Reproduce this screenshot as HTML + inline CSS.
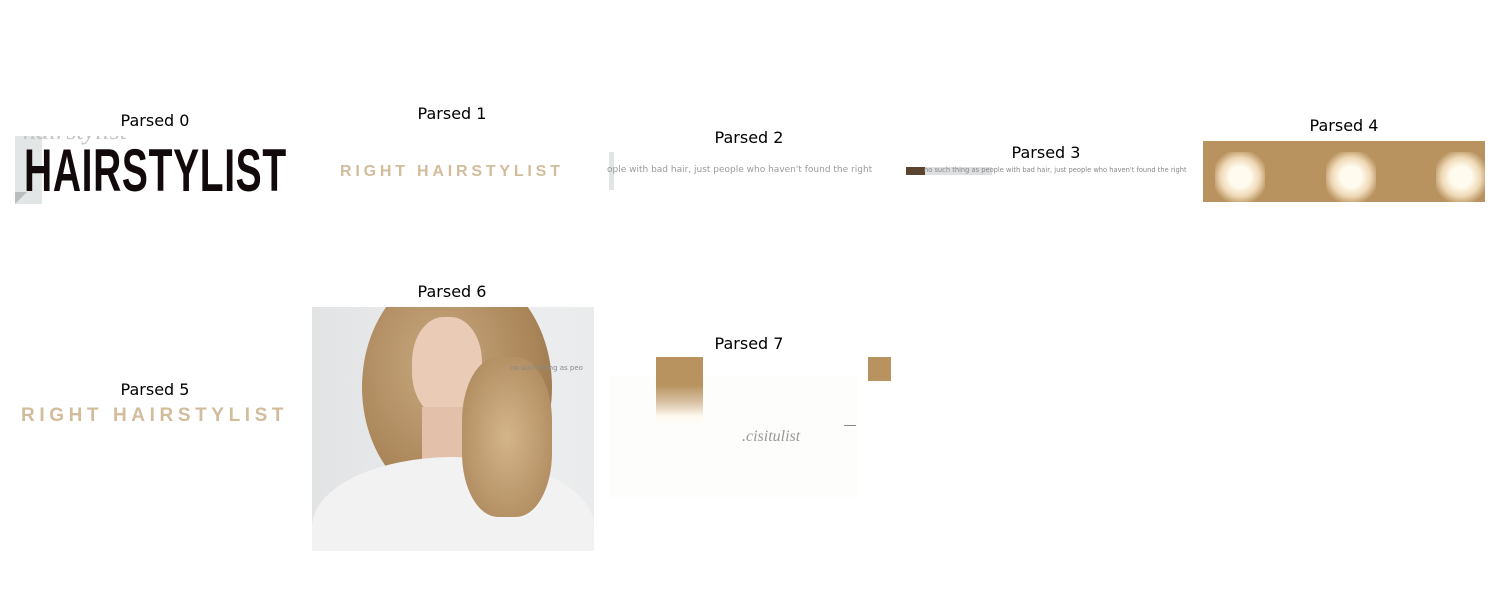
<!DOCTYPE html>
<html><head><style>
body{margin:0;width:1500px;height:600px;background:#fff;position:relative;overflow:hidden;font-family:"DejaVu Sans",sans-serif}
.t{position:absolute;font-size:16px;color:#000;transform:translateX(-50%);white-space:nowrap;line-height:1}
.a{position:absolute}
.pix{font-family:"Liberation Sans",sans-serif;font-weight:bold;color:#d2bc9c;white-space:nowrap}
</style></head><body>
<div class="t" style="left:155px;top:113px">Parsed 0</div>
<div class="t" style="left:452px;top:106px">Parsed 1</div>
<div class="t" style="left:749px;top:130px">Parsed 2</div>
<div class="t" style="left:1046px;top:145px">Parsed 3</div>
<div class="t" style="left:1344px;top:118px">Parsed 4</div>
<div class="t" style="left:155px;top:382px">Parsed 5</div>
<div class="t" style="left:452px;top:284px">Parsed 6</div>
<div class="t" style="left:749px;top:336px">Parsed 7</div>

<!-- 0 -->
<div class="a" style="left:15px;top:136px;width:272px;height:68px;overflow:hidden">
 <div class="a" style="left:0;top:0;width:27px;height:68px;background:#e3e6e6"></div>
 <div class="a" style="left:0;top:56px;width:0;height:0;border-left:12px solid #b9bdbd;border-bottom:12px solid transparent"></div>
 <div class="a" style="left:8px;top:-20px;font-family:'Liberation Serif',serif;font-style:italic;font-size:26px;color:#c4c4c4">hairstylist</div>
 <div class="a" style="left:9px;top:7px;font-family:'Liberation Sans Narrow','Liberation Sans',sans-serif;font-weight:bold;font-size:60px;line-height:56px;color:#120a0a;transform:scaleX(0.65);transform-origin:left;letter-spacing:1px;white-space:nowrap">HAIRSTYLIST</div>
</div>

<!-- 1 -->
<div class="a pix" style="left:340px;top:163px;font-size:16px;line-height:18px;letter-spacing:3.8px">RIGHT HAIRSTYLIST</div>

<!-- 2 -->
<div class="a" style="left:609px;top:152px;width:5px;height:38px;background:#e2e5e5"></div>
<div class="a" style="left:607px;top:165px;font-size:9px;color:#9a9a9a;white-space:nowrap;overflow:hidden;width:272px">ople with bad hair, just people who haven't found the right</div>

<!-- 3 -->
<div class="a" style="left:906px;top:167px;width:19px;height:8px;background:#5a4430"></div>
<div class="a" style="left:925px;top:167px;width:67px;height:8px;background:#dde0e0"></div>
<div class="a" style="left:924px;top:166px;font-size:7px;color:#888;white-space:nowrap;transform:scaleX(0.955);transform-origin:left">no such thing as people with bad hair, just people who haven't found the right</div>

<!-- 4 -->
<div class="a" style="left:1203px;top:141px;width:282px;height:61px;background:#b8925f;overflow:hidden">
<div class="a" style="left:12px;top:11px;width:50px;height:50px;background:radial-gradient(ellipse at center,#fffbee 30%,#efd9b6 55%,#b8925f 80%)"></div>
<div class="a" style="left:123px;top:11px;width:50px;height:50px;background:radial-gradient(ellipse at center,#fffbee 30%,#efd9b6 55%,#b8925f 80%)"></div>
<div class="a" style="left:233px;top:11px;width:50px;height:50px;background:radial-gradient(ellipse at center,#fffbee 30%,#efd9b6 55%,#b8925f 80%)"></div>
</div>

<!-- 5 -->
<div class="a pix" style="left:21px;top:405px;font-size:19px;line-height:21px;letter-spacing:4.6px">RIGHT HAIRSTYLIST</div>

<!-- 6 photo -->
<div class="a" style="left:312px;top:307px;width:282px;height:244px;overflow:hidden;background:linear-gradient(90deg,#e1e3e4,#eceeef 60%,#e9ebec)">
 <div class="a" style="left:50px;top:-40px;width:190px;height:240px;border-radius:50%;background:radial-gradient(ellipse at 40% 40%,#c9a880,#a98558 60%,#8a6a45)"></div>
 <div class="a" style="left:100px;top:10px;width:70px;height:100px;border-radius:45%;background:#e9cbb6"></div>
 <div class="a" style="left:110px;top:100px;width:45px;height:60px;background:#e2c0aa"></div>
 <div class="a" style="left:0px;top:150px;width:282px;height:140px;border-radius:50% 50% 0 0;background:#f2f2f2"></div>
 <div class="a" style="left:150px;top:50px;width:90px;height:160px;border-radius:40%;background:radial-gradient(ellipse,#d4b48a,#a88457)"></div>
 <div class="a" style="left:198px;top:57px;font-size:7px;color:#888;white-space:nowrap">no such thing as peo</div>
</div>

<!-- 7 -->
<div class="a" style="left:609px;top:376px;width:248px;height:122px;background:#fdfdfc"></div>
<div class="a" style="left:656px;top:357px;width:47px;height:70px;background:linear-gradient(#b8925f 0%,#b8925f 40%,#d9c3a5 65%,#fffaf0 85%,#fdfdfc)"></div>
<div class="a" style="left:868px;top:357px;width:23px;height:24px;background:#b8925f"></div>
<div class="a" style="left:844px;top:425px;width:12px;height:1px;background:#888"></div>
<div class="a" style="left:742px;top:428px;font-family:'Liberation Serif',serif;font-style:italic;font-size:16px;color:#999">.cisitulist</div>
</body></html>
